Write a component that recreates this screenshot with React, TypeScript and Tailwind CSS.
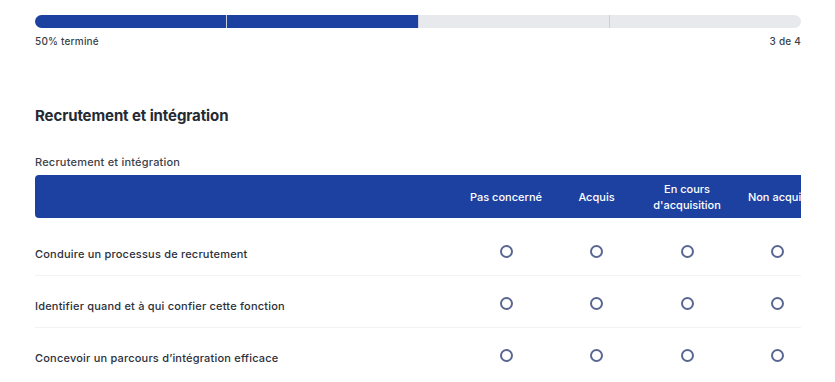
const columns = ["Pas concerné", "Acquis", "En cours d'acquisition", "Non acquis"];

const rows = [
  "Conduire un processus de recrutement",
  "Identifier quand et à qui confier cette fonction",
  "Concevoir un parcours d’intégration efficace",
];

export default function App() {
  const steps = 4;
  const done = 2;

  return (
    <div
      className="w-[835px] h-[382px] overflow-hidden bg-white px-[34px] pt-[15px] text-[#1f2430]"
      style={{ fontFamily: "Inter, 'Noto Sans', sans-serif" }}
    >
      <div className="ml-px">
        {/* progress */}
        <div className="flex h-[13px] overflow-hidden rounded-full">
          {Array.from({ length: steps }).map((_, i) => (
            <div
              key={i}
              className={
                "flex-1 " +
                (i < done ? "bg-[#1d41a1]" : "bg-[#e8e9ec]") +
                (i > 0 ? " border-l border-l-[#c9cfdc]" : "")
              }
            />
          ))}
        </div>
        <div className="mt-[6px] flex justify-between text-[10px] font-medium tracking-[0.2px] text-[#3a3f4a]">
          <span>50% terminé</span>
          <span>3 de 4</span>
        </div>

        <h2 className="mt-[56px] text-[15px] font-bold tracking-[-0.1px] text-[#252a33]">
          Recrutement et intégration
        </h2>

        <div className="mt-[26px] text-[11px] font-medium tracking-[0.2px] text-[#3a3f4a]">
          Recrutement et intégration
        </div>

        <div className="mt-[5px] overflow-hidden">
          <div className="w-[788px]">
            <div className="grid h-[43px] grid-cols-[426px_90px_91px_90px_91px] items-center rounded-[4px] bg-[#1d41a1] text-[11px] font-medium leading-[16px] text-white">
              <div />
              {columns.map((c) => (
                <div key={c} className="px-1 text-center">
                  {c === "En cours d'acquisition" ? (
                    <>
                      En cours
                      <br />
                      d'acquisition
                    </>
                  ) : (
                    <span className="whitespace-nowrap">{c}</span>
                  )}
                </div>
              ))}
            </div>

            <div className="pt-[6px]">
              {rows.map((r, i) => (
                <div
                  key={r}
                  className={
                    "grid h-[52px] grid-cols-[426px_90px_91px_90px_91px] items-center" +
                    (i < rows.length - 1 ? " border-b border-[#f1f2f4]" : "")
                  }
                >
                  <div className="pt-[9px] text-[11px] font-medium tracking-[0.2px] text-[#2b303a]">{r}</div>
                  {columns.map((c) => (
                    <div key={c} className="flex justify-center pt-[3px]">
                      <span className="h-[13px] w-[13px] rounded-full border-2 border-[#5a6792]" />
                    </div>
                  ))}
                </div>
              ))}
            </div>
          </div>
        </div>
      </div>
    </div>
  );
}
